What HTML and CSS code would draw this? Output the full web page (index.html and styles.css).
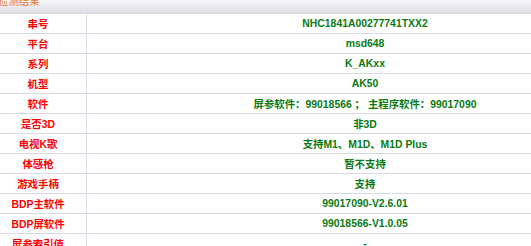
FILE: index.html
```html
<!DOCTYPE html>
<html>
<head>
<meta charset="utf-8">
<link rel="stylesheet" href="styles.css">
</head>
<body>
<div class="panel">
  <div class="panel-head"><span class="panel-title">检测结果</span></div>
  <div class="grid">
    <div class="lbl">串号</div><div class="val">NHC1841A00277741TXX2</div>
    <div class="lbl">平台</div><div class="val">msd648</div>
    <div class="lbl">系列</div><div class="val">K_AKxx</div>
    <div class="lbl">机型</div><div class="val">AK50</div>
    <div class="lbl">软件</div><div class="val">屏参软件：99018566 ； 主程序软件：99017090</div>
    <div class="lbl">是否3D</div><div class="val">非3D</div>
    <div class="lbl">电视K歌</div><div class="val">支持M1、M1D、M1D Plus</div>
    <div class="lbl">体感枪</div><div class="val">暂不支持</div>
    <div class="lbl">游戏手柄</div><div class="val">支持</div>
    <div class="lbl">BDP主软件</div><div class="val">99017090-V2.6.01</div>
    <div class="lbl">BDP屏软件</div><div class="val">99018566-V1.0.05</div>
    <div class="lbl">屏参索引值</div><div class="val">-</div>
  </div>
</div>
</body>
</html>
```

FILE: styles.css
```css
html, body {
  margin: 0;
  padding: 0;
  background: #ffffff;
  overflow: hidden;
}
body {
  font-family: "Liberation Sans", Arial, "Noto Sans CJK SC", sans-serif;
  font-size: 10.4px;
}
.panel {
  width: 531px;
}
.panel-head {
  height: 13px;
  border-bottom: 1px solid #d9d9e3;
  background: linear-gradient(to bottom, #f6f6f9 0%, #dedee8 100%);
  overflow: hidden;
}
.panel-title {
  display: block;
  margin-top: -5px;
  margin-left: -2px;
  line-height: 14px;
  color: #ec7424;
  font-size: 10.4px;
}
.grid {
  display: grid;
  grid-template-columns: 87px 1fr;
}
.lbl, .val {
  height: 20px;
  box-sizing: border-box;
  border-bottom: 1px solid #d9d9e3;
  display: flex;
  align-items: center;
  justify-content: center;
  font-weight: bold;
  white-space: nowrap;
}
.lbl {
  border-right: 1px solid #d9d9e3;
  color: #ff0000;
  padding-right: 10px;
}
.val {
  color: #0a7a12;
  padding-left: 112px;
}
```
